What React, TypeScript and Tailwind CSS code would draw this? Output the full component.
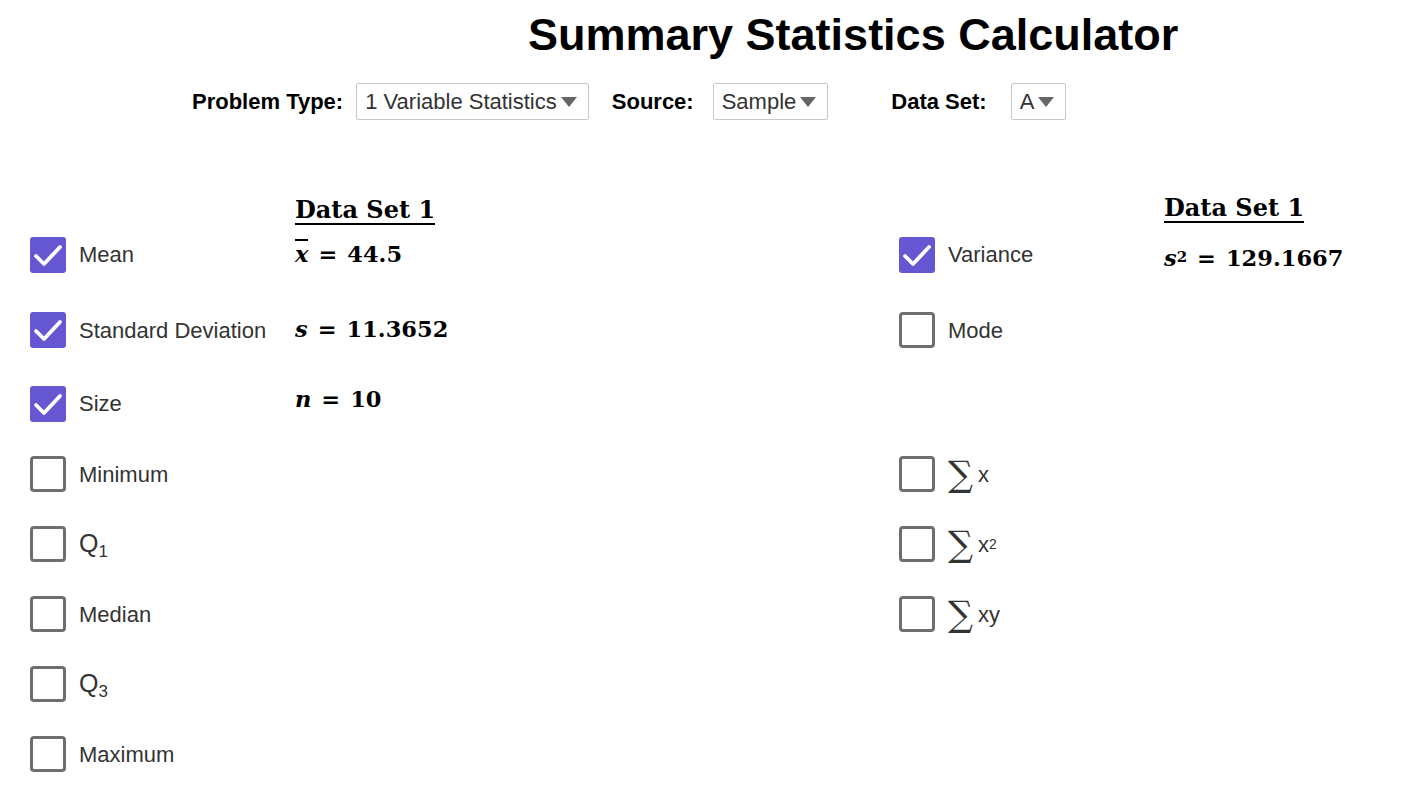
import React from "react";

type Row = {
  label: React.ReactNode;
  checked: boolean;
  value?: React.ReactNode;
  h: string;
};

const sans = { fontFamily: '"Liberation Sans", Arial, sans-serif' };
const serif = { fontFamily: '"DejaVu Serif", "Liberation Serif", serif' };

function Check({ checked }: { checked: boolean }) {
  if (checked) {
    return (
      <div className="flex h-9 w-9 shrink-0 items-center justify-center rounded-[3px] bg-[#6557d2]">
        <svg viewBox="0 0 36 36" className="h-9 w-9">
          <path
            d="M6 19 L14 27 L30 10"
            fill="none"
            stroke="white"
            strokeWidth="3.8"
            strokeLinecap="round"
            strokeLinejoin="round"
          />
        </svg>
      </div>
    );
  }
  return (
    <div className="h-9 w-9 shrink-0 rounded-[4px] border-[3px] border-[#6e6e6e] bg-white" />
  );
}

function Sigma({ children }: { children: React.ReactNode }) {
  return (
    <span className="flex items-center">
      <span style={serif} className="text-[35px] leading-none text-[#333]">
        ∑
      </span>
      <span className="ml-[5px]">{children}</span>
    </span>
  );
}

function Q({ n }: { n: string }) {
  return (
    <span className="flex items-baseline">
      <span className="text-[25px]">Q</span>
      <span className="relative top-[5px] text-[17px]">{n}</span>
    </span>
  );
}

function MathVal({ v, sym }: { v: string; sym: React.ReactNode }) {
  return (
    <span style={serif} className="flex items-baseline text-[22.5px] font-bold text-black">
      <span className="italic">{sym}</span>
      <span className="mx-[10px]">=</span>
      <span>{v}</span>
    </span>
  );
}

const LEFT: Row[] = [
  {
    label: "Mean",
    checked: true,
    h: "h-[75px]",
    value: (
      <MathVal
        sym={<span className="border-t-2 border-black leading-[19px]">x</span>}
        v="44.5"
      />
    ),
  },
  {
    label: "Standard Deviation",
    checked: true,
    h: "h-[76px]",
    value: <MathVal sym="s" v="11.3652" />,
  },
  {
    label: "Size",
    checked: true,
    h: "h-[71px]",
    value: (
      <span className="-mt-[8px]">
        <MathVal sym="n" v="10" />
      </span>
    ),
  },
  { label: "Minimum", checked: false, h: "h-[70px]" },
  { label: <Q n="1" />, checked: false, h: "h-[70px]" },
  { label: "Median", checked: false, h: "h-[70px]" },
  { label: <Q n="3" />, checked: false, h: "h-[70px]" },
  { label: "Maximum", checked: false, h: "h-[70px]" },
];

const RIGHT: Row[] = [
  {
    label: "Variance",
    checked: true,
    h: "h-[75px]",
    value: (
      <span className="mt-[8px]">
        <MathVal
          sym={
            <span>
              s<sup className="relative -top-[4px] text-[15px] not-italic">2</sup>
            </span>
          }
          v="129.1667"
        />
      </span>
    ),
  },
  { label: "Mode", checked: false, h: "h-[76px]" },
  { label: null, checked: false, h: "h-[71px]" },
  { label: <Sigma>x</Sigma>, checked: false, h: "h-[70px]" },
  {
    label: (
      <Sigma>
        <span>
          x<sup className="relative -top-[3px] text-[14px]">2</sup>
        </span>
      </Sigma>
    ),
    checked: false,
    h: "h-[70px]",
  },
  { label: <Sigma>xy</Sigma>, checked: false, h: "h-[70px]" },
];

function Column({ rows, lift }: { rows: Row[]; lift?: boolean }) {
  return (
    <div className="flex flex-col">
      <div className={`flex h-[31px] items-end ${lift ? "-mt-[2px] mb-[2px]" : ""}`}>
        <div className="w-[265px]" />
        <span
          style={serif}
          className="border-b-2 border-black text-[24px] font-bold leading-[26px] text-black"
        >
          Data Set 1
        </span>
      </div>
      <div className="-mt-[8px] flex flex-col">
        {rows.map((r, i) => (
          <div key={i} className={`flex items-center ${r.h}`}>
            <div className="flex w-[265px] items-center">
              {r.label !== null && <Check checked={r.checked} />}
              <span className="ml-[13px] text-[22px] text-[#333]">{r.label}</span>
            </div>
            {r.value}
          </div>
        ))}
      </div>
    </div>
  );
}

function Select({ text }: { text: string }) {
  return (
    <div className="flex h-[37px] items-center rounded-[2px] border border-[#c8c8c8] bg-white pl-[8px] pr-[10px] text-[22px] text-[#333]">
      <span>{text}</span>
      <svg viewBox="0 0 18 12" className="ml-[3px] h-[12px] w-[18px]">
        <path d="M1 1 L17 1 L9 11 Z" fill="#666" />
      </svg>
    </div>
  );
}

export default function App() {
  return (
    <div style={sans} className="h-[799px] w-[1406px] overflow-hidden bg-white">
      <h1 className="ml-[528px] pt-[10px] text-[45px] font-bold leading-[50px] text-black">
        Summary Statistics Calculator
      </h1>
      <div className="mt-[23px] flex items-center text-[22px]">
        <span className="ml-[192px] font-bold text-black">Problem Type:</span>
        <span className="ml-[13px]">
          <Select text="1 Variable Statistics" />
        </span>
        <span className="ml-[23px] font-bold text-black">Source:</span>
        <span className="ml-[19px]">
          <Select text="Sample" />
        </span>
        <span className="ml-[63px] font-bold text-black">Data Set:</span>
        <span className="ml-[24px]">
          <Select text="A" />
        </span>
      </div>
      <div className="mt-[74px] flex pl-[30px]">
        <div className="w-[869px]">
          <Column rows={LEFT} />
        </div>
        <div>
          <Column rows={RIGHT} lift />
        </div>
      </div>
    </div>
  );
}
